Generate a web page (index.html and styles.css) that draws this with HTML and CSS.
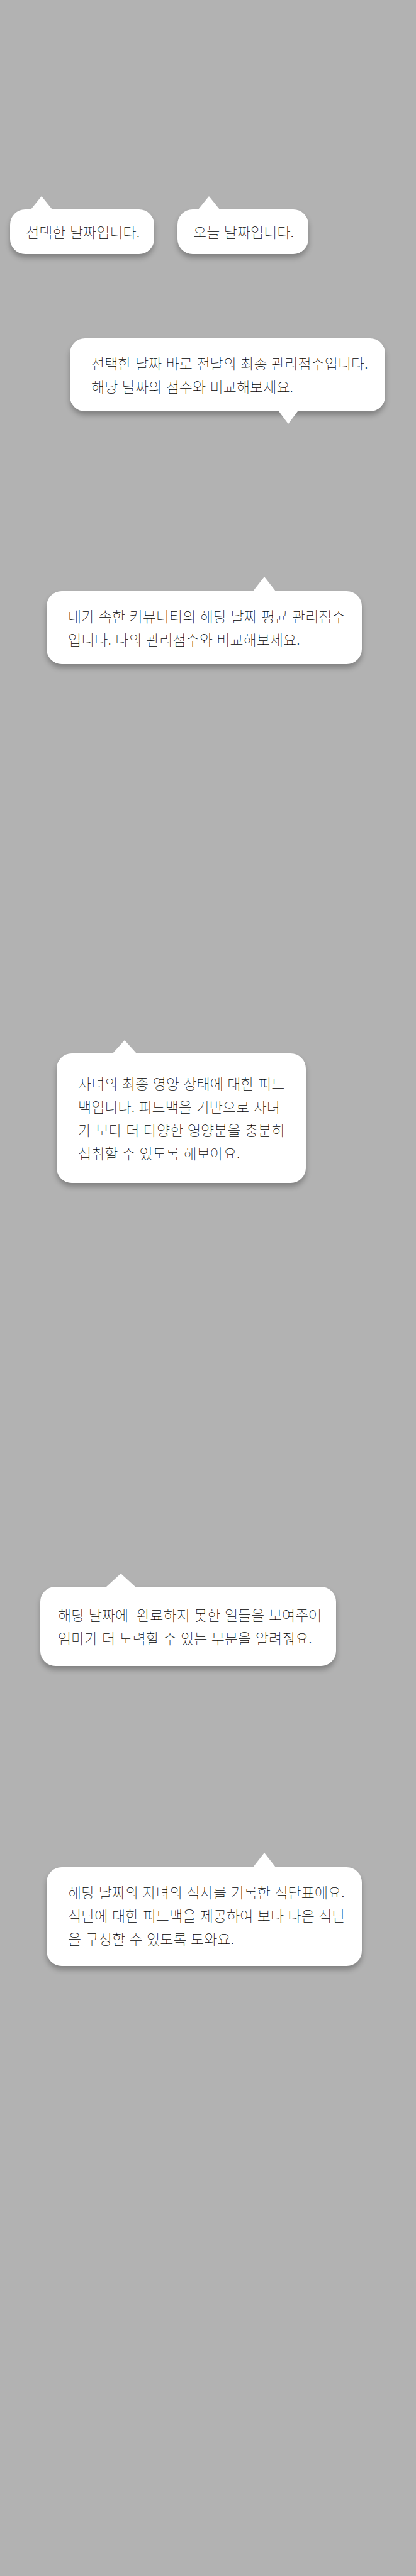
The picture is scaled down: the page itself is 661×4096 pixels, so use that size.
FILE: index.html
```html
<!DOCTYPE html>
<html lang="ko">
<head>
<meta charset="utf-8">
<meta name="viewport" content="width=device-width, initial-scale=1">
<title>도움말</title>
<link rel="stylesheet" href="styles.css">
</head>
<body>
<main class="guide">
  <div class="dates">
    <p class="bubble bubble--selected">선택한 날짜입니다.</p>
    <p class="bubble bubble--today">오늘 날짜입니다.</p>
  </div>
  <p class="bubble bubble--previous">선택한 날짜 바로 전날의 최종 관리점수입니다.<br>해당 날짜의 점수와 비교해보세요.</p>
  <p class="bubble bubble--community">내가 속한 커뮤니티의 해당 날짜 평균 관리점수<br>입니다. 나의 관리점수와 비교해보세요.</p>
  <p class="bubble bubble--nutrition">자녀의 최종 영양 상태에 대한 피드<br>백입니다. 피드백을 기반으로 자녀<br>가 보다 더 다양한 영양분을 충분히<br>섭취할 수 있도록 해보아요.</p>
  <p class="bubble bubble--missed">해당 날짜에&nbsp; 완료하지 못한 일들을 보여주어<br>엄마가 더 노력할 수 있는 부분을 알려줘요.</p>
  <p class="bubble bubble--meals">해당 날짜의 자녀의 식사를 기록한 식단표에요.<br>식단에 대한 피드백을 제공하여 보다 나은 식단<br>을 구성할 수 있도록 도와요.</p>
</main>
</body>
</html>
```

FILE: styles.css
```css
* {
  box-sizing: border-box;
}

body {
  margin: 0;
  min-height: 100vh;
  background: #b2b2b2;
  color: #000;
  font-family: "Noto Sans CJK KR", sans-serif;
  font-size: 23px;
  font-weight: 100;
  line-height: 37px;
}

.guide {
  display: flex;
  flex-direction: column;
  align-items: flex-start;
  padding: 333px 0 120px;
}

.dates {
  display: flex;
  flex-wrap: wrap;
  gap: 37px;
  margin-left: 16px;
}

.bubble {
  --tail-x: 50px;
  --tail-width: 34px;
  --tail-height: 21px;
  position: relative;
  max-width: 100%;
  margin: 0;
  padding: 21px 0 21px 34px;
  border-radius: 24px;
  background: #fff;
  box-shadow: 0 6px 8px rgba(0, 0, 0, 0.28);
  white-space: nowrap;
}

.bubble::before {
  content: "";
  position: absolute;
  bottom: 100%;
  left: calc(var(--tail-x) - var(--tail-width) / 2);
  width: var(--tail-width);
  height: var(--tail-height);
  background: #fff;
  clip-path: polygon(50% 0, 100% 100%, 0 100%);
}

.bubble--selected,
.bubble--today {
  padding: 17px 0 17px 25px;
}

.bubble--selected {
  width: 229px;
}

.bubble--today {
  width: 208px;
}

.bubble--previous {
  --tail-x: 347px;
  --tail-width: 30px;
  --tail-height: 20px;
  width: 501px;
  margin: 134px 0 0 111px;
}

.bubble--previous::before {
  top: 100%;
  bottom: auto;
  clip-path: polygon(0 0, 100% 0, 50% 100%);
}

.bubble--community,
.bubble--meals {
  --tail-x: 346px;
  --tail-width: 36px;
  --tail-height: 23px;
  width: 501px;
  margin-left: 74px;
}

.bubble--community {
  margin-top: 286px;
}

.bubble--nutrition {
  --tail-x: 108px;
  --tail-width: 38px;
  width: 396px;
  margin: 619px 0 0 90px;
  padding-top: 29px;
  padding-bottom: 29px;
}

.bubble--missed {
  --tail-x: 128px;
  --tail-width: 46px;
  width: 470px;
  margin: 642px 0 0 64px;
  padding: 26px 0 26px 28px;
}

.bubble--meals {
  margin-top: 320px;
  padding-bottom: 25px;
}
```
